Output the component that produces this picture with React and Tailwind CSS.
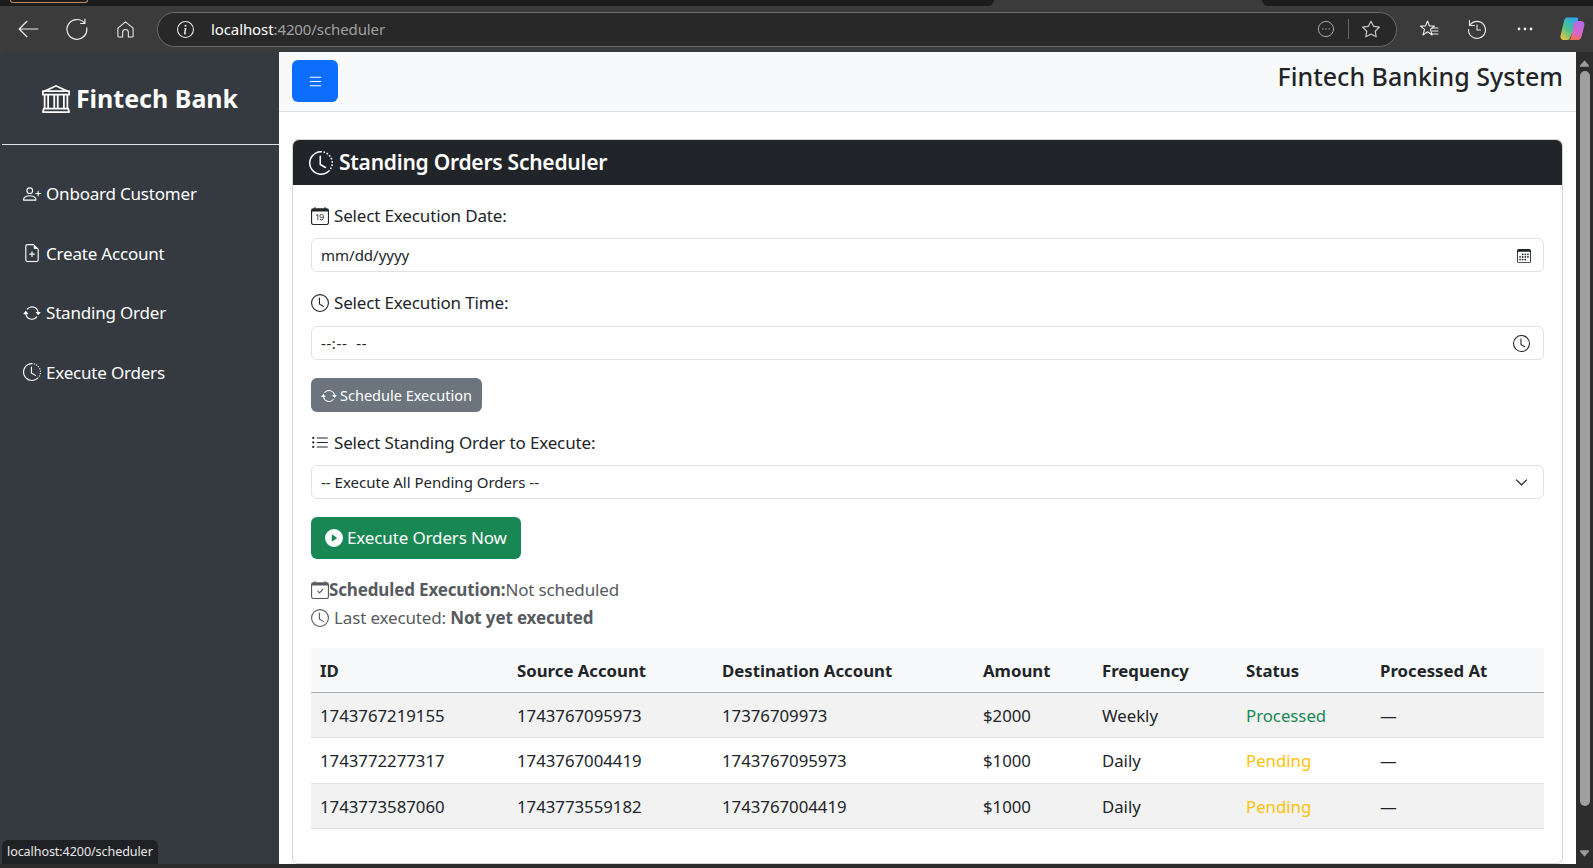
import {
  BsBank,
  BsPersonPlus,
  BsFileEarmarkPlus,
  BsArrowRepeat,
  BsClockHistory,
  BsCalendarDate,
  BsClock,
  BsListUl,
  BsPlayCircleFill,
  BsCalendarCheck,
  BsList,
  BsChevronDown,
  BsCalendar3,
  BsInfoCircle,
  BsStar,
  BsCaretUpFill,
  BsCaretDownFill,
} from 'react-icons/bs'

const font = "font-['Noto_Sans','Open_Sans',sans-serif]"

const navItems = [
  { label: 'Onboard Customer', icon: BsPersonPlus },
  { label: 'Create Account', icon: BsFileEarmarkPlus },
  { label: 'Standing Order', icon: BsArrowRepeat },
  { label: 'Execute Orders', icon: BsClockHistory },
]

const orders = [
  { id: '1743767219155', source: '1743767095973', dest: '17376709973', amount: '$2000', freq: 'Weekly', status: 'Processed' },
  { id: '1743772277317', source: '1743767004419', dest: '1743767095973', amount: '$1000', freq: 'Daily', status: 'Pending' },
  { id: '1743773587060', source: '1743773559182', dest: '1743767004419', amount: '$1000', freq: 'Daily', status: 'Pending' },
]

function ToolIcon({ size = 20, className = '', children }) {
  return (
    <svg width={size} height={size} viewBox="0 0 20 20" fill="none" stroke="currentColor" strokeWidth="1.1" strokeLinecap="round" strokeLinejoin="round" className={className}>
      {children}
    </svg>
  )
}

function CopilotLogo() {
  return (
    <svg width="26" height="26" viewBox="0 0 26 26" className="ml-[26px]">
      <defs>
        <linearGradient id="copilotLeft" x1="0.8" y1="0" x2="0.1" y2="1">
          <stop offset="0" stopColor="#2aa8f2" />
          <stop offset="0.55" stopColor="#4cc38a" />
          <stop offset="1" stopColor="#f5c33b" />
        </linearGradient>
        <linearGradient id="copilotRight" x1="0.6" y1="0" x2="0.3" y2="1">
          <stop offset="0" stopColor="#b06be8" />
          <stop offset="0.6" stopColor="#d667c8" />
          <stop offset="1" stopColor="#f2703f" />
        </linearGradient>
      </defs>
      <path d="M8 1.5h9.5c1.5 0 2 1.4 1.4 2.6L11 22c-.7 1.4-1.7 2-3 2H5c-2.5 0-4-2-3.4-4.5L5 5c.5-2.2 1.4-3.5 3-3.5z" fill="url(#copilotLeft)" />
      <path d="M17 5h4.5c2.8 0 4.4 2 3.8 4.7l-2.6 10.6c-.6 2.5-2 3.7-4.2 3.7H9c1.3 0 2.2-.8 2.8-2.1l3-14c.3-1.6.9-2.9 2.2-2.9z" fill="url(#copilotRight)" />
    </svg>
  )
}

function BrowserBar() {
  return (
    <div className="h-[52px] shrink-0 bg-[#3b3b3b]">
      <div className="flex h-[6px]">
        <div className="h-full w-[994px] rounded-br-md bg-[#1c1c1c] pl-[10px]">
          <div className="h-[3px] w-[78px] rounded-b-md border-x border-b border-[#c08a5e]" />
        </div>
        <div className="h-full flex-1 bg-[#3b3b3b]" />
        <div className="h-full w-[331px] rounded-bl-md bg-[#1c1c1c]" />
      </div>
      <div className="flex h-[46px] items-center text-[#ececec]">
        <ToolIcon size={22} className="ml-[17px]">
          <path d="M19 10H2M9 3l-7 7 7 7" />
        </ToolIcon>
        <ToolIcon size={22} className="ml-[27px]">
          <path d="M16.8 4.6A9 9 0 1 0 18.8 9" />
          <path d="M17.2 1v4h-4" />
        </ToolIcon>
        <ToolIcon size={19} className="ml-[28px]">
          <path d="M2 8.5L10 2l8 6.5V17a1 1 0 0 1-1 1h-4v-5a3 3 0 0 0-6 0v5H3a1 1 0 0 1-1-1z" />
        </ToolIcon>
        <div className="ml-[22px] flex h-[35px] w-[1240px] items-center rounded-full border border-[#6b6b6b] bg-[#282828] pl-[19px] pr-[16px]">
          <BsInfoCircle className="text-[17px]" />
          <span className="ml-[17px] text-[15px] tracking-[-0.1px] text-white">localhost<span className="text-[#a0a0a0]">:4200/scheduler</span></span>
          <ToolIcon size={18} className="ml-auto text-[#a8a8a8]">
            <circle cx="10" cy="10" r="8.5" />
            <path d="M6.5 10h.01M10 10h.01M13.5 10h.01" strokeWidth="1.6" />
          </ToolIcon>
          <div className="mx-[13px] h-[20px] w-px bg-[#666]" />
          <BsStar className="text-[18px] text-[#c8c8c8]" />
        </div>
        <ToolIcon size={20} className="ml-[22px]">
          <path d="M8.5 2l2 5h5l-4 3.3 1.6 5.7-4.6-3.2L4 16l1.5-5.7L1.5 7h5z" />
          <path d="M13 9h6M13.5 12h5.5M13 15h6" />
        </ToolIcon>
        <ToolIcon size={20} className="ml-[28px]">
          <path d="M3 6a8.5 8.5 0 1 1-1.5 4.5" />
          <path d="M2.5 1.5V6.5H7.5" />
          <path d="M10 6v5h3.5" />
        </ToolIcon>
        <svg width="16" height="4" viewBox="0 0 16 4" fill="currentColor" className="ml-[30px]">
          <circle cx="2" cy="2" r="1.4" />
          <circle cx="8" cy="2" r="1.4" />
          <circle cx="14" cy="2" r="1.4" />
        </svg>
        <CopilotLogo />
      </div>
    </div>
  )
}

function Sidebar() {
  return (
    <aside className="flex w-[279px] shrink-0 flex-col rounded-tl-lg bg-[#343a40] pl-[2px] text-white">
      <div className="flex h-[93px] items-center justify-center border-b border-[#dee2e6] pt-[2px] pr-[1px] text-[25px] font-bold">
        <BsBank className="mr-[6px] text-[28px]" />
        Fintech Bank
      </div>
      <nav className="flex flex-col pt-[19px]">
        {navItems.map((item) => (
          <a key={item.label} className="flex h-[59.5px] items-center pl-[21px] text-[17px] tracking-[-0.2px]">
            <item.icon className="mr-[5px] text-[18px]" />
            {item.label}
          </a>
        ))}
      </nav>
    </aside>
  )
}

function FieldLabel({ icon: Icon, children, className = '' }) {
  return (
    <label className={`flex items-center text-[17px] leading-[24px] tracking-[-0.15px] text-[#212529] ${className}`}>
      <Icon className="mr-[5px] text-[18px]" />
      {children}
    </label>
  )
}

function InputBox({ children, className = '' }) {
  return (
    <div className={`flex h-[34px] items-center justify-between rounded-md border border-[#dee2e6] bg-white pt-[1px] pl-[9px] pr-[12px] text-[15px] text-[#212529] ${className}`}>
      {children}
    </div>
  )
}

function Scheduler() {
  return (
    <section className="mr-[13px] ml-[13px] mt-[27px] rounded-md border border-[#d5d5d5] bg-white">
      <header className="flex h-[45px] items-center rounded-t-md bg-[#212529] pl-[16px] text-[21px] font-semibold tracking-[-0.24px] text-white">
        <BsClockHistory className="mr-[6px] text-[24px]" />
        Standing Orders Scheduler
      </header>
      <div className="px-[18px] pt-[19px] pb-[34px]">
        <FieldLabel icon={BsCalendarDate}>Select Execution Date:</FieldLabel>
        <InputBox className="mt-[10px]">
          mm/dd/yyyy
          <BsCalendar3 className="text-[14px]" />
        </InputBox>

        <FieldLabel icon={BsClock} className="mt-[19px]">Select Execution Time:</FieldLabel>
        <InputBox className="mt-[11px]">
          <span className="whitespace-pre tracking-[0.6px]">--:--  --</span>
          <BsClock className="mr-[1px] text-[17px]" />
        </InputBox>

        <button className="mt-[18px] flex h-[34px] items-center rounded-md bg-[#6c757d] px-[10px] pt-[1px] text-[14.5px] text-white">
          <BsArrowRepeat className="mr-[3px] text-[16px]" />
          Schedule Execution
        </button>

        <FieldLabel icon={BsListUl} className="mt-[19px]">Select Standing Order to Execute:</FieldLabel>
        <InputBox className="mt-[10px]">
          -- Execute All Pending Orders --
          <BsChevronDown stroke="currentColor" strokeWidth={1} className="mr-[3px] text-[13px] text-[#343a40]" />
        </InputBox>

        <button className="mt-[18px] flex h-[42px] items-center rounded-md bg-[#198754] px-[14px] text-[17px] tracking-[-0.14px] text-white">
          <BsPlayCircleFill className="mr-[4px] text-[18px]" />
          Execute Orders Now
        </button>

        <p className="mt-[19px] flex items-center text-[17px] leading-[24px] tracking-[-0.15px] text-[#575b60]">
          <BsCalendarCheck className="text-[18px]" />
          <strong className="font-bold">Scheduled Execution:</strong>Not scheduled
        </p>
        <p className="mt-[4px] flex items-center text-[17px] leading-[24px] tracking-[-0.15px] text-[#575b60]">
          <BsClock className="mr-[5px] text-[18px]" />
          Last executed:&nbsp;<strong className="font-bold">Not yet executed</strong>
        </p>

        <table className="mt-[18px] w-full table-fixed border-collapse text-[16.75px] text-[#212529]">
          <thead>
            <tr className="h-[44px] border-b border-[#a9acaf] bg-[#f8f9fa] text-left">
              <th className="w-[197px] pt-[1px] pl-[9px] font-bold">ID</th>
              <th className="w-[205px] pt-[1px] pl-[9px] font-bold">Source Account</th>
              <th className="w-[261px] pt-[1px] pl-[9px] font-bold">Destination Account</th>
              <th className="w-[119px] pt-[1px] pl-[9px] font-bold">Amount</th>
              <th className="w-[144px] pt-[1px] pl-[9px] font-bold">Frequency</th>
              <th className="w-[134px] pt-[1px] pl-[9px] font-bold">Status</th>
              <th className="pt-[1px] pl-[9px] font-bold">Processed At</th>
            </tr>
          </thead>
          <tbody>
            {orders.map((o) => (
              <tr key={o.id} className="h-[45.5px] border-b border-[#dee2e6] odd:bg-[#f2f2f2]">
                <td className="pt-[1px] pl-[9px]">{o.id}</td>
                <td className="pt-[1px] pl-[9px]">{o.source}</td>
                <td className="pt-[1px] pl-[9px]">{o.dest}</td>
                <td className="pt-[1px] pl-[9px]">{o.amount}</td>
                <td className="pt-[1px] pl-[9px]">{o.freq}</td>
                <td className={o.status === 'Processed' ? 'pt-[1px] pl-[9px] text-[#198754]' : 'pt-[1px] pl-[9px] text-[#ffc107]'}>{o.status}</td>
                <td className="pt-[1px] pl-[9px]">—</td>
              </tr>
            ))}
          </tbody>
        </table>
      </div>
    </section>
  )
}

export default function App() {
  return (
    <div className={`relative flex h-[868px] w-[1593px] flex-col overflow-hidden bg-[#3b3b3b] ${font}`}>
      <BrowserBar />
      <div className="flex min-h-0 flex-1 border-b-[4px] border-[#2b2b2b]">
        <Sidebar />
        <main className="min-w-0 flex-1 overflow-hidden bg-white">
          <div className="flex h-[60px] items-start justify-between border-b border-[#dee2e6] bg-[#f8f9fa] pl-[13px] pr-[13px] pt-[8px]">
            <button className="flex h-[42px] w-[46px] items-center justify-center rounded-md bg-[#0d6efd] text-white">
              <BsList className="text-[17px]" />
            </button>
            <h1 className="text-[25px] leading-[32px] font-medium text-[#212529]">Fintech Banking System</h1>
          </div>
          <Scheduler />
        </main>
        <div className="flex w-[17px] shrink-0 flex-col items-center bg-[#2d2d2d] text-[#9b9b9b]">
          <BsCaretUpFill className="mt-[5px] text-[13px]" />
          <div className="mt-[1px] h-[735px] w-[10px] rounded-full bg-[#9f9f9f]" />
          <BsCaretDownFill className="mt-auto mb-[4px] text-[13px]" />
        </div>
      </div>
      <div className="absolute bottom-[4px] left-[2px] flex h-[24px] items-center rounded-t-md bg-[#202124] px-[5px] text-[12.6px] tracking-[-0.1px] text-[#e8e8e8]">
        localhost:4200/scheduler
      </div>
    </div>
  )
}
